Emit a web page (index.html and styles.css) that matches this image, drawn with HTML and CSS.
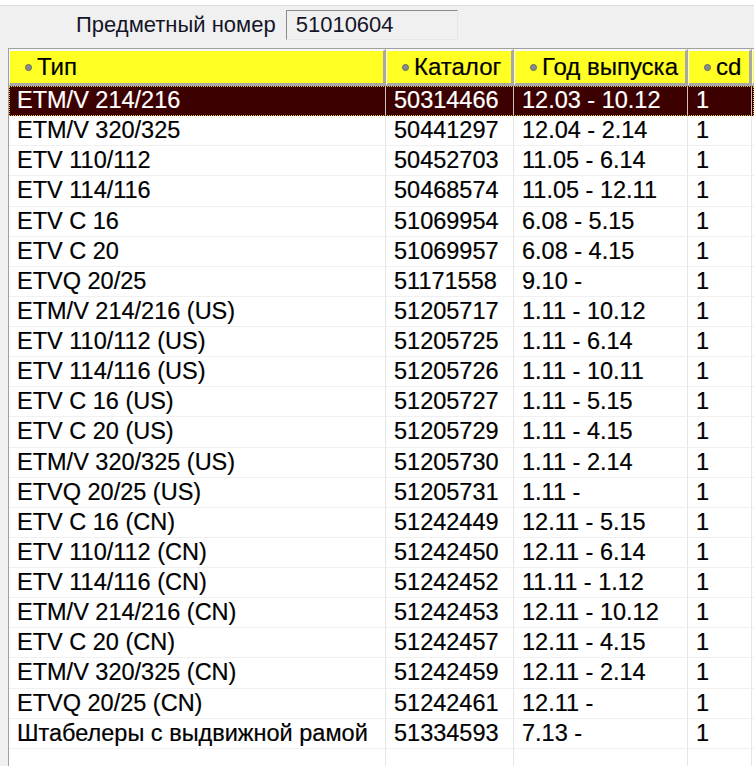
FILE: index.html
```html
<!DOCTYPE html>
<html lang="ru">
<head>
<meta charset="utf-8">
<title>Предметный номер</title>
<link rel="stylesheet" href="styles.css">
</head>
<body>
<div class="topstrip"></div>
<div class="panel">
  <div class="itemrow">
    <span class="label">Предметный номер</span>
    <div class="field">51010604</div>
  </div>
  <div class="grid">
    <div class="row head">
      <div class="hc"><span class="dot"></span>Тип</div>
      <div class="hc"><span class="dot"></span>Каталог</div>
      <div class="hc"><span class="dot"></span>Год выпуска</div>
      <div class="hc"><span class="dot"></span>cd</div>
      <div class="hc"></div>
    </div>
    <div class="row sel"><div class="c">ETM/V 214/216</div><div class="c">50314466</div><div class="c">12.03 - 10.12</div><div class="c">1</div><div class="c"></div></div>
    <div class="row"><div class="c">ETM/V 320/325</div><div class="c">50441297</div><div class="c">12.04 - 2.14</div><div class="c">1</div><div class="c"></div></div>
    <div class="row"><div class="c">ETV 110/112</div><div class="c">50452703</div><div class="c">11.05 - 6.14</div><div class="c">1</div><div class="c"></div></div>
    <div class="row"><div class="c">ETV 114/116</div><div class="c">50468574</div><div class="c">11.05 - 12.11</div><div class="c">1</div><div class="c"></div></div>
    <div class="row"><div class="c">ETV C 16</div><div class="c">51069954</div><div class="c">6.08 - 5.15</div><div class="c">1</div><div class="c"></div></div>
    <div class="row"><div class="c">ETV C 20</div><div class="c">51069957</div><div class="c">6.08 - 4.15</div><div class="c">1</div><div class="c"></div></div>
    <div class="row"><div class="c">ETVQ 20/25</div><div class="c">51171558</div><div class="c">9.10 -</div><div class="c">1</div><div class="c"></div></div>
    <div class="row"><div class="c">ETM/V 214/216 (US)</div><div class="c">51205717</div><div class="c">1.11 - 10.12</div><div class="c">1</div><div class="c"></div></div>
    <div class="row"><div class="c">ETV 110/112 (US)</div><div class="c">51205725</div><div class="c">1.11 - 6.14</div><div class="c">1</div><div class="c"></div></div>
    <div class="row"><div class="c">ETV 114/116 (US)</div><div class="c">51205726</div><div class="c">1.11 - 10.11</div><div class="c">1</div><div class="c"></div></div>
    <div class="row"><div class="c">ETV C 16 (US)</div><div class="c">51205727</div><div class="c">1.11 - 5.15</div><div class="c">1</div><div class="c"></div></div>
    <div class="row"><div class="c">ETV C 20 (US)</div><div class="c">51205729</div><div class="c">1.11 - 4.15</div><div class="c">1</div><div class="c"></div></div>
    <div class="row"><div class="c">ETM/V 320/325 (US)</div><div class="c">51205730</div><div class="c">1.11 - 2.14</div><div class="c">1</div><div class="c"></div></div>
    <div class="row"><div class="c">ETVQ 20/25 (US)</div><div class="c">51205731</div><div class="c">1.11 -</div><div class="c">1</div><div class="c"></div></div>
    <div class="row"><div class="c">ETV C 16 (CN)</div><div class="c">51242449</div><div class="c">12.11 - 5.15</div><div class="c">1</div><div class="c"></div></div>
    <div class="row"><div class="c">ETV 110/112 (CN)</div><div class="c">51242450</div><div class="c">12.11 - 6.14</div><div class="c">1</div><div class="c"></div></div>
    <div class="row"><div class="c">ETV 114/116 (CN)</div><div class="c">51242452</div><div class="c">11.11 - 1.12</div><div class="c">1</div><div class="c"></div></div>
    <div class="row"><div class="c">ETM/V 214/216 (CN)</div><div class="c">51242453</div><div class="c">12.11 - 10.12</div><div class="c">1</div><div class="c"></div></div>
    <div class="row"><div class="c">ETV C 20 (CN)</div><div class="c">51242457</div><div class="c">12.11 - 4.15</div><div class="c">1</div><div class="c"></div></div>
    <div class="row"><div class="c">ETM/V 320/325 (CN)</div><div class="c">51242459</div><div class="c">12.11 - 2.14</div><div class="c">1</div><div class="c"></div></div>
    <div class="row"><div class="c">ETVQ 20/25 (CN)</div><div class="c">51242461</div><div class="c">12.11 -</div><div class="c">1</div><div class="c"></div></div>
    <div class="row"><div class="c">Штабелеры с выдвижной рамой</div><div class="c">51334593</div><div class="c">7.13 -</div><div class="c">1</div><div class="c"></div></div>
    <div class="row empty"><div class="c"></div><div class="c"></div><div class="c"></div><div class="c"></div><div class="c"></div></div>
  </div>
</div>
</body>
</html>
```
FILE: styles.css
```css
html, body {
  margin: 0;
  padding: 0;
  height: 100%;
  overflow: hidden;
}
body {
  background: #f0f0f0;
  font-family: "Liberation Sans", Arial, sans-serif;
  color: #000;
}
.topstrip {
  height: 5px;
  background: #fff;
  border-bottom: 1px solid #dcdcdc;
}
.panel {
  background: #f0f0f0;
  height: 760px;
}
.itemrow {
  display: flex;
  align-items: center;
  padding: 4px 0 0 76px;
  height: 30px;
}
.label {
  font-size: 22px;
  color: #15152a;
  margin-right: 10px;
}
.field {
  box-sizing: border-box;
  width: 172px;
  height: 30px;
  border: 1px solid;
  border-color: #8a8a8a #e6e6e6 #e6e6e6 #8a8a8a;
  background: #f0f0f0;
  font-size: 22px;
  line-height: 28px;
  padding-left: 9px;
  color: #15152a;
}
.grid {
  margin: 8px 0 0 8px;
  border-top: 1px solid #a0a0a0;
  border-left: 1px solid #a0a0a0;
  background: #fff;
  height: 720px;
  font-size: 23.5px;
  -webkit-text-stroke: 0.2px currentColor;
}
.row {
  display: grid;
  grid-template-columns: 377px 128px 174px 64px 1fr;
  height: 30.14px;
}
.c {
  box-sizing: border-box;
  border-right: 1px solid #e6e6e6;
  border-bottom: 1px solid #f0f0f0;
  padding-left: 8px;
  line-height: 29px;
  white-space: nowrap;
  overflow: hidden;
}
.head {
  height: 37px;
  background: #e4e4e4;
  font-size: 24px;
}
.hc {
  box-sizing: border-box;
  display: flex;
  align-items: center;
  gap: 5px;
  background: #ffff24;
  border-style: solid;
  border-width: 2px 3px 3px 1px;
  border-color: #f8f8f8 #a8a8a8 #a8a8a8 #f8f8f8;
  padding-left: 15px;
  white-space: nowrap;
  overflow: hidden;
}
.dot {
  width: 5px;
  height: 5px;
  border-radius: 50%;
  background: #8a8a8a;
  border: 1px solid #666;
  flex: none;
}
.sel {
  background: #3c0000;
  color: #fff;
  outline: 1px dotted #d8c040;
  outline-offset: -1px;
}
.sel .c {
  border-right-color: #d0c0c0;
  border-bottom-color: #3c0000;
}
```
